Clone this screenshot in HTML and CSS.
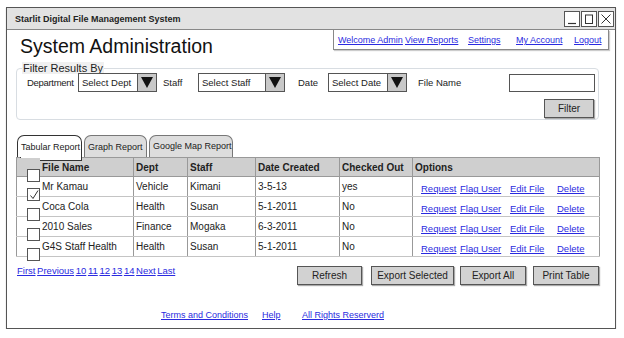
FILE: index.html
```html
<!DOCTYPE html>
<html lang="en">
<head>
  <meta charset="UTF-8" />
  <title>Starlit Digital File Management System</title>
  <link rel="stylesheet" href="styles.css">
</head>
<body>
  <div class="window">
    <div class="titlebar">
      <span class="app-name">Starlit Digital File Management System</span>
      <div class="controls">
        <span class="ctl"><svg width="12" height="12" viewBox="0 0 12 12"><path d="M2 10.5h8" stroke="#333" stroke-width="1.2"/></svg></span>
        <span class="ctl"><svg width="12" height="12" viewBox="0 0 12 12"><rect x="2.5" y="2" width="7" height="8.5" fill="none" stroke="#333" stroke-width="1"/></svg></span>
        <span class="ctl"><svg width="12" height="12" viewBox="0 0 12 12"><path d="M1.5 1.5l9 9M10.5 1.5l-9 9" stroke="#333" stroke-width="1"/></svg></span>
      </div>
    </div>

    <div class="header">
      <h1>System Administration</h1>
      <ul class="topnav">
        <li class="n1"><a href="#">Welcome Admin</a></li>
        <li class="n2"><a href="#">View Reports</a></li>
        <li class="n3"><a href="#">Settings</a></li>
        <li class="n4"><a href="#">My Account</a></li>
        <li><a href="#">Logout</a></li>
      </ul>
    </div>

    <div class="main">
      <fieldset class="filter">
        <legend>Filter Results By</legend>
        <div class="filter-row">
          <label class="lbl-dept">Department</label>
          <div class="select w-dept"><span>Select Dept</span><b class="arrow"></b></div>
          <label class="lbl-staff">Staff</label>
          <div class="select w-staff"><span>Select Staff</span><b class="arrow"></b></div>
          <label class="lbl-date">Date</label>
          <div class="select w-date"><span>Select Date</span><b class="arrow"></b></div>
          <label>File Name</label>
          <div class="textbox"></div>
        </div>
        <div class="filter-actions">
          <button class="btn btn-filter">Filter</button>
        </div>
      </fieldset>

      <div class="tabs">
        <div class="tab active">Tabular Report</div>
        <div class="tab">Graph Report</div>
        <div class="tab">Google Map Report</div>
      </div>

      <table class="report">
        <thead>
          <tr>
            <th class="chk"><span class="box"></span></th>
            <th class="c-name">File Name</th>
            <th class="c-dept">Dept</th>
            <th class="c-staff">Staff</th>
            <th class="c-date">Date Created</th>
            <th class="c-out">Checked Out</th>
            <th>Options</th>
          </tr>
        </thead>
        <tbody>
          <tr>
            <td class="chk"><span class="box"><svg width="10" height="10" viewBox="0 0 10 10"><path d="M1.5 5.5l2.5 3 5-8" fill="none" stroke="#333" stroke-width="1"/></svg></span></td>
            <td>Mr Kamau</td><td>Vehicle</td><td>Kimani</td><td>3-5-13</td><td>yes</td>
            <td class="opts"><a class="o1" href="#">Request</a><a class="o2" href="#">Flag User</a><a class="o3" href="#">Edit File</a><a href="#">Delete</a></td>
          </tr>
          <tr>
            <td class="chk"><span class="box"></span></td>
            <td>Coca Cola</td><td>Health</td><td>Susan</td><td>5-1-2011</td><td>No</td>
            <td class="opts"><a class="o1" href="#">Request</a><a class="o2" href="#">Flag User</a><a class="o3" href="#">Edit File</a><a href="#">Delete</a></td>
          </tr>
          <tr>
            <td class="chk"><span class="box"></span></td>
            <td>2010 Sales</td><td>Finance</td><td>Mogaka</td><td>6-3-2011</td><td>No</td>
            <td class="opts"><a class="o1" href="#">Request</a><a class="o2" href="#">Flag User</a><a class="o3" href="#">Edit File</a><a href="#">Delete</a></td>
          </tr>
          <tr>
            <td class="chk"><span class="box"></span></td>
            <td>G4S Staff Health</td><td>Health</td><td>Susan</td><td>5-1-2011</td><td>No</td>
            <td class="opts"><a class="o1" href="#">Request</a><a class="o2" href="#">Flag User</a><a class="o3" href="#">Edit File</a><a href="#">Delete</a></td>
          </tr>
        </tbody>
      </table>

      <div class="below-table">
        <div class="pager">
          <a href="#">First</a> <a href="#">Previous</a> <a href="#">10</a> <a href="#">11</a> <a href="#">12</a> <a href="#">13</a> <a href="#">14</a> <a href="#">Next</a> <a href="#">Last</a>
        </div>
        <div class="actions">
          <button class="btn b-refresh">Refresh</button>
          <button class="btn b-export">Export Selected</button>
          <button class="btn b-all">Export All</button>
          <button class="btn b-print">Print Table</button>
        </div>
      </div>

      <div class="footer">
        <a class="f1" href="#">Terms and Conditions</a>
        <a class="f2" href="#">Help</a>
        <a href="#">All Rights Reserverd</a>
      </div>
    </div>
  </div>
</body>
</html>
```

FILE: styles.css
```css
body {
  margin: 0;
  background: white;
  font-family: "Comic Sans MS", "Liberation Sans", sans-serif;
  font-size: 10px;
  color: #222;
  white-space: nowrap;
}

a {
  color: #2a2ae0;
}

.window {
  margin: 7px 0 0 6px;
  width: 610px;
  height: 322px;
  border: 1px solid #555;
  box-shadow: 0 1px 1px #bbb;
  box-sizing: border-box;
  overflow: hidden;
}

.titlebar {
  height: 22px;
  background: #e2e2e2;
  border-bottom: 1px solid #888;
  display: flex;
  align-items: center;
  justify-content: space-between;
  padding: 0 1px 0 8px;
  box-sizing: border-box;
}

.app-name {
  font-size: 9px;
  font-weight: bold;
}

.controls {
  display: flex;
  gap: 1px;
}

.ctl {
  width: 16px;
  height: 16px;
  border: 1px solid #555;
  background: white;
  display: flex;
  align-items: center;
  justify-content: center;
  box-sizing: border-box;
}

/* header */
.header {
  display: flex;
  justify-content: space-between;
  align-items: flex-start;
  padding: 0 6px 0 13px;
}

h1 {
  margin: 5px 0 0;
  font-size: 19.5px;
  font-weight: normal;
  color: #111;
}

.topnav {
  list-style: none;
  margin: 0;
  padding: 0 0 0 4px;
  width: 276px;
  height: 20px;
  box-sizing: border-box;
  border: 1px solid #888;
  border-top: none;
  box-shadow: 1px 1px 1px #ccc;
  display: flex;
  align-items: center;
}

.topnav li {
  flex-shrink: 0;
}

.topnav a {
  font-size: 9px;
}

.topnav .n1 { width: 67px; }
.topnav .n2 { width: 63px; }
.topnav .n3 { width: 48px; }
.topnav .n4 { width: 58px; }

/* main area */
.main {
  padding: 0 16px 0 9px;
}

.filter {
  margin: 4px 0 0;
  padding: 0 3px 3px 10px;
  border: 1px solid #d8dde2;
  border-radius: 4px;
  height: 58px;
  box-sizing: border-box;
}

.filter legend {
  padding: 0 1px;
  margin-left: -5px;
  background: #f0f0f0;
  font-family: "Liberation Sans", sans-serif;
  font-size: 11px;
  color: #222;
}

.filter-row {
  display: flex;
  align-items: center;
  margin-top: -1px;
}

.filter-row label {
  flex-shrink: 0;
  font-size: 9.5px;
}

.lbl-dept { width: 51px; letter-spacing: -0.3px; }
.lbl-staff { width: 35px; }
.lbl-date { width: 30px; }

.select {
  display: flex;
  flex-shrink: 0;
  height: 19px;
  border: 1px solid #555;
  box-sizing: border-box;
}

.select span {
  flex: 1;
  padding: 2px 3px;
  line-height: 13px;
  font-size: 9.5px;
}

.select .arrow {
  width: 18px;
  background: #c8c8c8;
  border-left: 1px solid #555;
  display: flex;
  align-items: center;
  justify-content: center;
}

.select .arrow::before {
  content: "";
  border-left: 6px solid transparent;
  border-right: 6px solid transparent;
  border-top: 11px solid #111;
}

.w-dept { width: 79px; margin-right: 6px; }
.w-staff { width: 87px; margin-right: 13px; }
.w-date { width: 79px; margin-right: 11px; }

.textbox {
  margin-left: auto;
  width: 86px;
  height: 18px;
  border: 1px solid #555;
  box-sizing: border-box;
}

.filter-actions {
  display: flex;
  justify-content: flex-end;
  margin-top: 7px;
  padding-right: 1px;
}

.btn {
  font-family: "Comic Sans MS", "Liberation Sans", sans-serif;
  font-size: 10px;
  color: #222;
  background: #d2d2d2;
  border: 1px solid #555;
  box-shadow: 1px 1px 1px #aaa;
  height: 19px;
  padding: 0;
  cursor: pointer;
}

.btn-filter { width: 50px; }

/* tabs */
.tabs {
  display: flex;
  gap: 2px;
  margin-top: 15px;
  padding-left: 1px;
  height: 22px;
}

.tab {
  border: 1px solid #777;
  border-bottom: none;
  border-radius: 7px 7px 0 0;
  background: #ddd;
  padding: 0 3px;
  display: flex;
  align-items: center;
  font-size: 9px;
  box-sizing: border-box;
}

.tab.active {
  background: white;
  border-color: #333;
  position: relative;
  width: 65px;
}

.tab.active::after {
  content: "";
  position: absolute;
  left: 2px;
  right: -1px;
  bottom: -4px;
  height: 3px;
  background: white;
  border: 1px solid #333;
  border-top: none;
}

.tab:nth-child(2) { width: 63px; }
.tab:nth-child(3) { width: 84px; padding-bottom: 2px; }

/* table */
.report {
  width: 584px;
  border-collapse: collapse;
  border: 1px solid #999;
}

.report th,
.report td {
  height: 19px;
  padding: 0 2px;
  text-align: left;
  border-left: 1px solid #999;
  border-bottom: 1px solid #c4c4c4;
  vertical-align: middle;
  font-size: 10px;
}

.report th {
  height: 18px;
  background: #cfcfcf;
  font-weight: bold;
  border-bottom: 1px solid #999;
}

.report .chk {
  width: 23px;
  border-left: none;
  position: relative;
  padding: 0;
}

.report .chk + th,
.report .chk + td {
  border-left: none;
}

.box {
  position: absolute;
  left: 10px;
  top: 11px;
  width: 11px;
  height: 11px;
  background: white;
  border: 1px solid #555;
  display: flex;
  align-items: center;
  justify-content: center;
}

.c-name { width: 89px; }
.c-dept { width: 49px; }
.c-staff { width: 63px; }
.c-date { width: 79px; }
.c-out { width: 68px; }

.report .opts {
  padding-left: 8px;
}

.opts a {
  display: inline-block;
  position: relative;
  top: 2px;
  font-size: 9.5px;
}

.opts .o1 { width: 39px; }
.opts .o2 { width: 50px; }
.opts .o3 { width: 47px; }

/* below table */
.below-table {
  display: flex;
  justify-content: space-between;
  align-items: flex-start;
  margin-top: 7px;
  padding-left: 1px;
}

.pager {
  margin-top: 1px;
  font-size: 9.5px;
  word-spacing: -1px;
}

.actions {
  display: flex;
  margin-top: 2px;
}

.b-refresh { width: 65px; margin-right: 9px; }
.b-export { width: 83px; margin-right: 6px; }
.b-all { width: 66px; margin-right: 7px; }
.b-print { width: 66px; }

.footer {
  display: flex;
  padding-left: 145px;
  margin-top: 25px;
}

.footer a {
  font-size: 9px;
}

.footer .f1 { width: 84px; margin-right: 17px; }
.footer .f2 { width: 19px; margin-right: 21px; }
```
